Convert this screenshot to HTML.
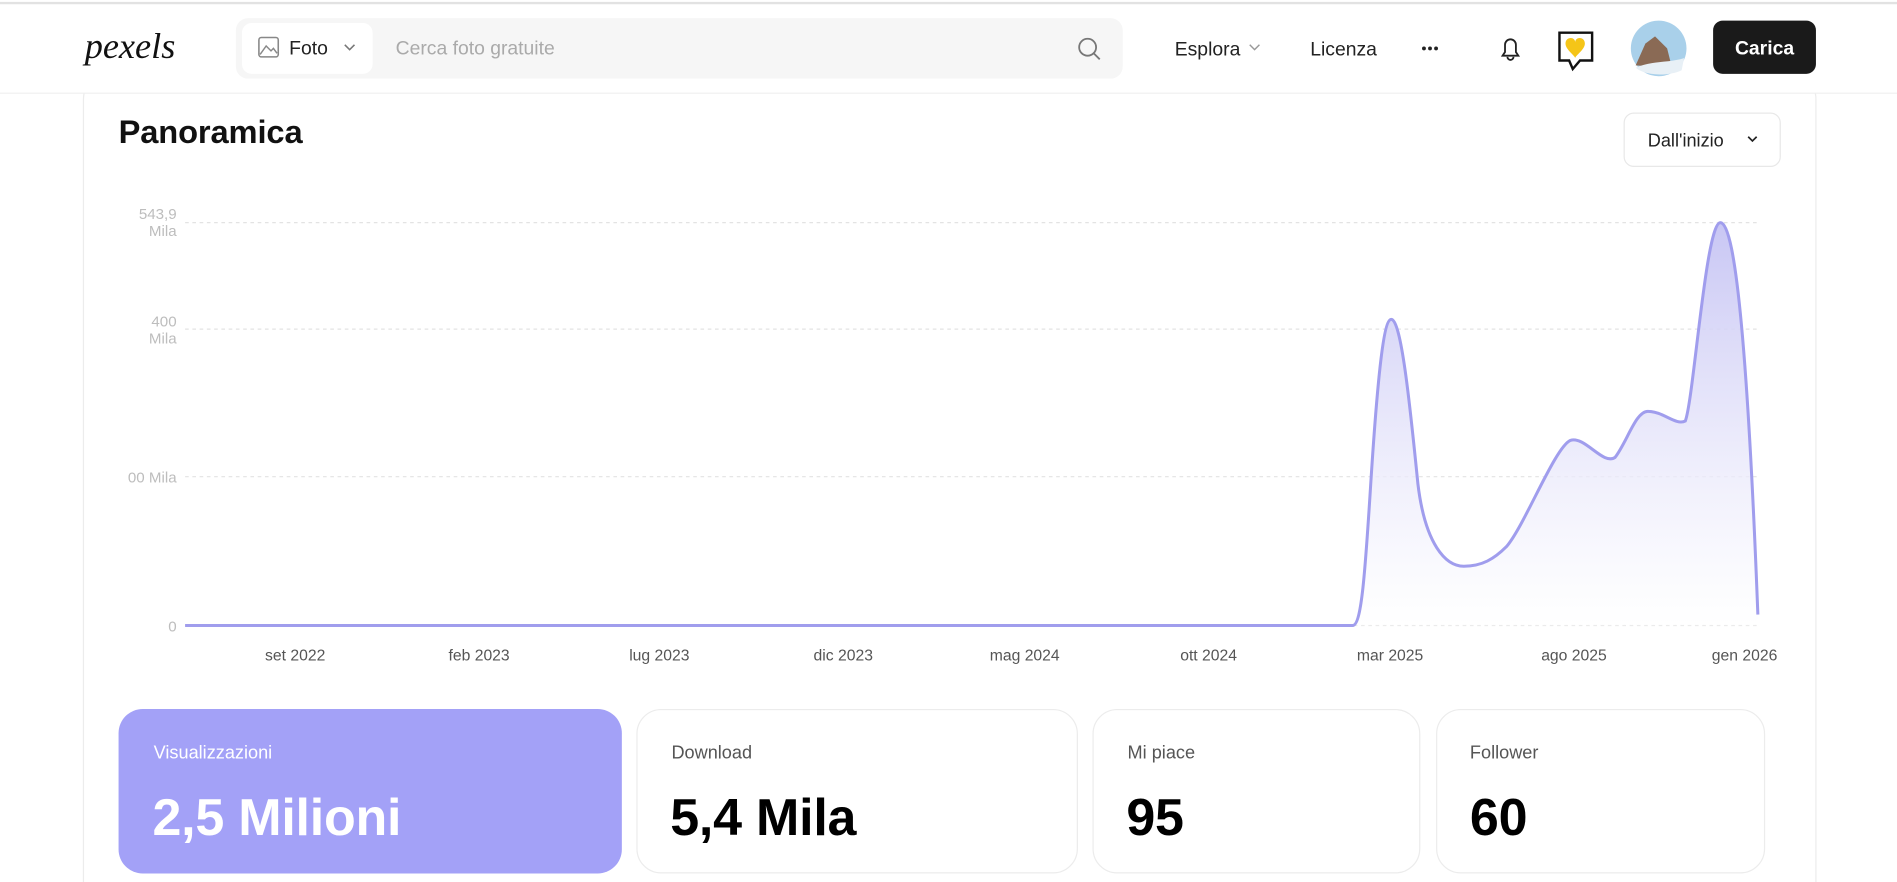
<!DOCTYPE html>
<html><head><meta charset="utf-8"><style>
html,body{margin:0;padding:0;background:#fff;overflow:hidden}
svg{display:block}
text{font-family:"Liberation Sans",sans-serif}
</style></head><body>
<svg width="1897" height="882" viewBox="0 0 1568 729" xmlns="http://www.w3.org/2000/svg">
<defs>
<linearGradient id="g" x1="0" y1="0" x2="0" y2="1">
<stop offset="0" stop-color="#c8c6f4"/><stop offset="1" stop-color="#ffffff" stop-opacity="0.6"/>
</linearGradient>
</defs>
<rect width="1568" height="729" fill="#fff"/>
<rect x="69" y="60" width="1432" height="700" rx="22" fill="#fff" stroke="#ececec"/>
<rect x="0" y="0" width="1568" height="77" fill="#fff"/>
<line x1="0" y1="2.5" x2="1568" y2="2.5" stroke="#e2e2e2" stroke-width="2"/>
<line x1="0" y1="77" x2="1568" y2="77" stroke="#efefef"/>
<text x="70" y="48" font-size="30" font-style="italic" fill="#111" style="font-family:'Liberation Serif',serif">pexels</text>
<rect x="195" y="15" width="733" height="50" rx="10" fill="#f6f6f6"/>
<rect x="200" y="19" width="108" height="42" rx="8" fill="#fff"/>
<rect x="214" y="31" width="16" height="16" rx="2" fill="none" stroke="#888" stroke-width="1.3"/>
<path d="M215 45 L220 38 L224 42 L226 40 L229 44" fill="none" stroke="#888" stroke-width="1.2"/>
<text x="239" y="45" font-size="16" fill="#222">Foto</text>
<path d="M285 37 L289 41 L293 37" fill="none" stroke="#777" stroke-width="1.3"/>
<text x="327" y="45" font-size="16" fill="#aaa">Cerca foto gratuite</text>
<circle cx="899" cy="39" r="7" fill="none" stroke="#777" stroke-width="1.5"/>
<line x1="904" y1="44" x2="909" y2="49" stroke="#777" stroke-width="1.5"/>
<text x="971" y="46" font-size="16" fill="#222">Esplora</text>
<path d="M1033 37 L1037 41 L1041 37" fill="none" stroke="#999" stroke-width="1.2"/>
<text x="1083" y="46" font-size="16" fill="#222">Licenza</text>
<circle cx="1177" cy="40" r="1.6" fill="#222"/><circle cx="1182" cy="40" r="1.6" fill="#222"/><circle cx="1187" cy="40" r="1.6" fill="#222"/>
<path d="M1242 46 L1244 43 L1244 37 A4.5 4.5 0 0 1 1253 37 L1253 43 L1255 46 Z M1246 47 A2.5 2.5 0 0 0 1251 47" fill="none" stroke="#222" stroke-width="1.5"/>
<path d="M1289 27 H1316 V50 H1306 L1300 57 L1297 50 H1289 Z" fill="#fff" stroke="#111" stroke-width="2"/>
<path d="M1294 36 C1294 30 1302 30 1302 35 C1302 30 1310 30 1310 36 C1310 41 1302 46 1302 48 C1302 46 1294 41 1294 36Z" fill="#f5c518"/>
<circle cx="1371" cy="40" r="23" fill="#a9d0ea"/>
<path d="M1352 54 L1360 36 L1368 30 L1378 40 L1382 56 Z" fill="#8a6a55"/>
<path d="M1352 56 C1365 50 1380 52 1392 48 L1390 58 C1380 63 1360 63 1352 56Z" fill="#e8f0f6"/>
<rect x="1416" y="17" width="85" height="44" rx="8" fill="#1a1a1a"/>
<text x="1458.5" y="45" font-size="16" font-weight="bold" fill="#fff" text-anchor="middle">Carica</text>
<text x="98" y="118" font-size="27" font-weight="bold" fill="#111" letter-spacing="-0.1">Panoramica</text>
<rect x="1342.5" y="93.5" width="129" height="44" rx="8" fill="#fff" stroke="#e8e8e8"/>
<text x="1362" y="121" font-size="15" fill="#222">Dall'inizio</text>
<path d="M1445 113 L1448.5 116.5 L1452 113" fill="none" stroke="#222" stroke-width="1.4"/>
<g stroke="#e3e3e3" stroke-dasharray="3 3">
<line x1="153" y1="184" x2="1452" y2="184"/>
<line x1="153" y1="272" x2="1452" y2="272"/>
<line x1="153" y1="394" x2="1452" y2="394"/>
<line x1="153" y1="517" x2="1452" y2="517"/>
</g>
<g font-size="12.5" fill="#bdbdbd" text-anchor="end">
<text x="146" y="181">543,9</text><text x="146" y="195">Mila</text>
<text x="146" y="270">400</text><text x="146" y="284">Mila</text>
<text x="146" y="399">00 Mila</text>
<text x="146" y="522">0</text>
</g>
<path d="M153,517 L1118,517 C1125,517 1128,480 1133,400 C1140,290 1145,264 1150,264 C1158,264 1165,330 1172,400 C1178,450 1195,468 1210,468 C1225,468 1235,462 1245,452 C1260,435 1285,370 1298,364 C1310,360 1325,385 1335,378 C1345,365 1352,340 1362,340 C1375,340 1385,352 1393,348 C1400,330 1410,184 1422,184 C1435,184 1445,300 1453,508 L1453,517 Z" fill="url(#g)"/>
<path d="M153,517 L1118,517 C1125,517 1128,480 1133,400 C1140,290 1145,264 1150,264 C1158,264 1165,330 1172,400 C1178,450 1195,468 1210,468 C1225,468 1235,462 1245,452 C1260,435 1285,370 1298,364 C1310,360 1325,385 1335,378 C1345,365 1352,340 1362,340 C1375,340 1385,352 1393,348 C1400,330 1410,184 1422,184 C1435,184 1445,300 1453,508" fill="none" stroke="#a09ded" stroke-width="2.5"/>
<g font-size="13" fill="#555" text-anchor="middle">
<text x="244" y="546">set 2022</text><text x="396" y="546">feb 2023</text><text x="545" y="546">lug 2023</text>
<text x="697" y="546">dic 2023</text><text x="847" y="546">mag 2024</text><text x="999" y="546">ott 2024</text>
<text x="1149" y="546">mar 2025</text><text x="1301" y="546">ago 2025</text><text x="1442" y="546">gen 2026</text>
</g>
<rect x="98" y="586" width="416" height="136" rx="20" fill="#a3a1f7"/>
<rect x="526.5" y="586.5" width="364" height="135" rx="20" fill="#fff" stroke="#ececec"/>
<rect x="903.5" y="586.5" width="270" height="135" rx="20" fill="#fff" stroke="#ececec"/>
<rect x="1187.5" y="586.5" width="271" height="135" rx="20" fill="#fff" stroke="#ececec"/>
<g font-size="15">
<text x="127" y="627" fill="#fff">Visualizzazioni</text>
<text x="555" y="627" fill="#555">Download</text>
<text x="932" y="627" fill="#555">Mi piace</text>
<text x="1215" y="627" fill="#555">Follower</text>
</g>
<g font-size="43" font-weight="bold" letter-spacing="-0.2">
<text x="126" y="690" fill="#fff">2,5 Milioni</text>
<text x="554" y="690" fill="#000">5,4 Mila</text>
<text x="931" y="690" fill="#000">95</text>
<text x="1215" y="690" fill="#000">60</text>
</g>
</svg>
</body></html>
